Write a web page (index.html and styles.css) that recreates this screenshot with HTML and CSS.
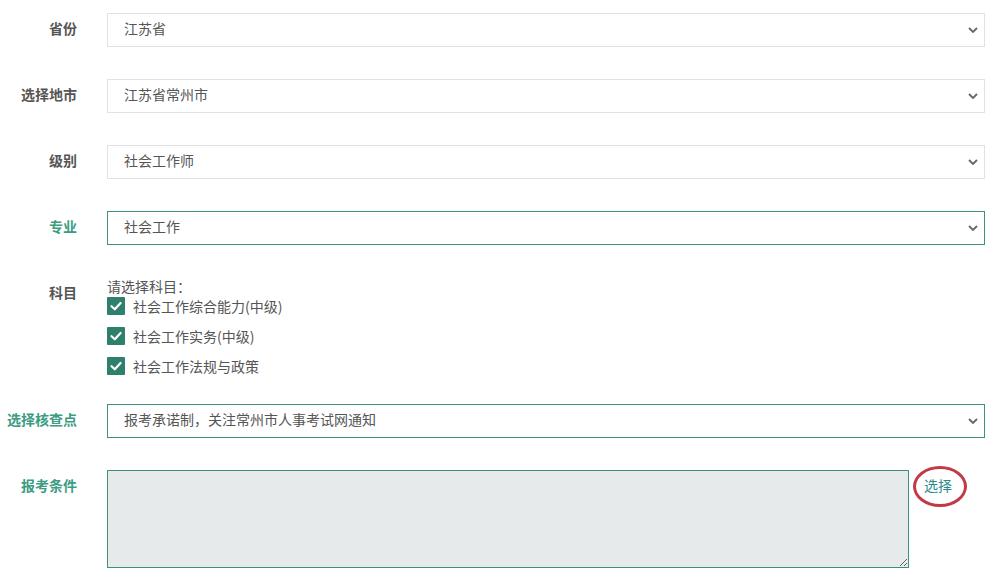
FILE: index.html
```html
<!DOCTYPE html>
<html lang="zh-CN">
<head>
    <meta charset="UTF-8" />
    <meta name="viewport" content="width=device-width, initial-scale=1.0" />
    <title>报考信息</title>
    <link rel="stylesheet" href="styles.css">
</head>
<body>
    <form class="applyForm">
        <div class="row">
            <label class="rowLabel">省份</label>
            <select class="field">
                <option>江苏省</option>
            </select>
        </div>
        <div class="row">
            <label class="rowLabel">选择地市</label>
            <select class="field">
                <option>江苏省常州市</option>
            </select>
        </div>
        <div class="row">
            <label class="rowLabel">级别</label>
            <select class="field">
                <option>社会工作师</option>
            </select>
        </div>
        <div class="row">
            <label class="rowLabel active">专业</label>
            <select class="field active">
                <option>社会工作</option>
            </select>
        </div>
        <div class="row">
            <label class="rowLabel">科目</label>
            <div class="subjects">
                <div class="subjectTitle">请选择科目：</div>
                <label class="subject"><span class="tick"><svg viewBox="0 0 18 18" width="18" height="18"><path d="M4.5 9.2 L7.8 12.3 L13.6 6" fill="none" stroke="#fff" stroke-width="2.2" stroke-linecap="round" stroke-linejoin="round"/></svg></span>社会工作综合能力(中级)</label>
                <label class="subject"><span class="tick"><svg viewBox="0 0 18 18" width="18" height="18"><path d="M4.5 9.2 L7.8 12.3 L13.6 6" fill="none" stroke="#fff" stroke-width="2.2" stroke-linecap="round" stroke-linejoin="round"/></svg></span>社会工作实务(中级)</label>
                <label class="subject"><span class="tick"><svg viewBox="0 0 18 18" width="18" height="18"><path d="M4.5 9.2 L7.8 12.3 L13.6 6" fill="none" stroke="#fff" stroke-width="2.2" stroke-linecap="round" stroke-linejoin="round"/></svg></span>社会工作法规与政策</label>
            </div>
        </div>
        <div class="row">
            <label class="rowLabel active">选择核查点</label>
            <select class="field active">
                <option>报考承诺制，关注常州市人事考试网通知</option>
            </select>
        </div>
        <div class="row">
            <label class="rowLabel active">报考条件</label>
            <textarea class="condition"></textarea>
            <a class="pick" href="#">选择</a>
        </div>
    </form>
</body>
</html>
```

FILE: styles.css
```css
body {
    font-family: "Noto Sans CJK SC", "Liberation Sans", sans-serif;
    font-size: 14px;
    background: #ffffff;
    color: #555555;
    margin: 0;
    padding: 0;
}
.applyForm {
    display: flex;
    flex-direction: column;
    gap: 32px;
    padding: 13px 17px 0 0;
}
.row {
    display: flex;
    align-items: flex-start;
    gap: 30px;
}
.rowLabel {
    flex: 0 0 77px;
    text-align: right;
    line-height: 30px;
    font-weight: bold;
    color: #555555;
    white-space: nowrap;
}
.rowLabel.active {
    color: #3b9c82;
}
.field {
    flex: 1;
    height: 34px;
    padding: 0 30px 4px 16px;
    border: 1px solid #e2e2e2;
    border-radius: 0;
    background: #ffffff url("data:image/svg+xml;utf8,<svg xmlns='http://www.w3.org/2000/svg' width='10' height='6' viewBox='0 0 10 6'><path d='M1 1 L5 5 L9 1' fill='none' stroke='%23666' stroke-width='1.8'/></svg>") no-repeat right 6px center;
    appearance: none;
    -webkit-appearance: none;
    font-family: inherit;
    font-size: 14px;
    color: #555555;
}
.field.active {
    border-color: #3f8f7d;
}
.subjects {
    display: flex;
    flex-direction: column;
    gap: 12px;
    margin-bottom: -3px;
}
.subjectTitle {
    line-height: 18px;
    margin-bottom: -10px;
}
.subject {
    display: flex;
    align-items: center;
    gap: 8px;
    height: 18px;
    line-height: 18px;
}
.tick {
    width: 18px;
    height: 18px;
    background: #2e7f6c;
    border-radius: 1px;
}
.tick svg {
    display: block;
}
.condition {
    flex: 0 0 802px;
    height: 98px;
    box-sizing: border-box;
    border: 1px solid #3f8f7d;
    background: #e6eaea;
    margin: 0;
    resize: both;
}
.pick {
    position: relative;
    margin-left: -15px;
    line-height: 30px;
    color: #2b8a8c;
    text-decoration: none;
}
.pick::after {
    content: "";
    position: absolute;
    left: -11px;
    top: -4px;
    width: 48px;
    height: 35px;
    border: 3px solid #c23a44;
    border-radius: 50%;
}
```
